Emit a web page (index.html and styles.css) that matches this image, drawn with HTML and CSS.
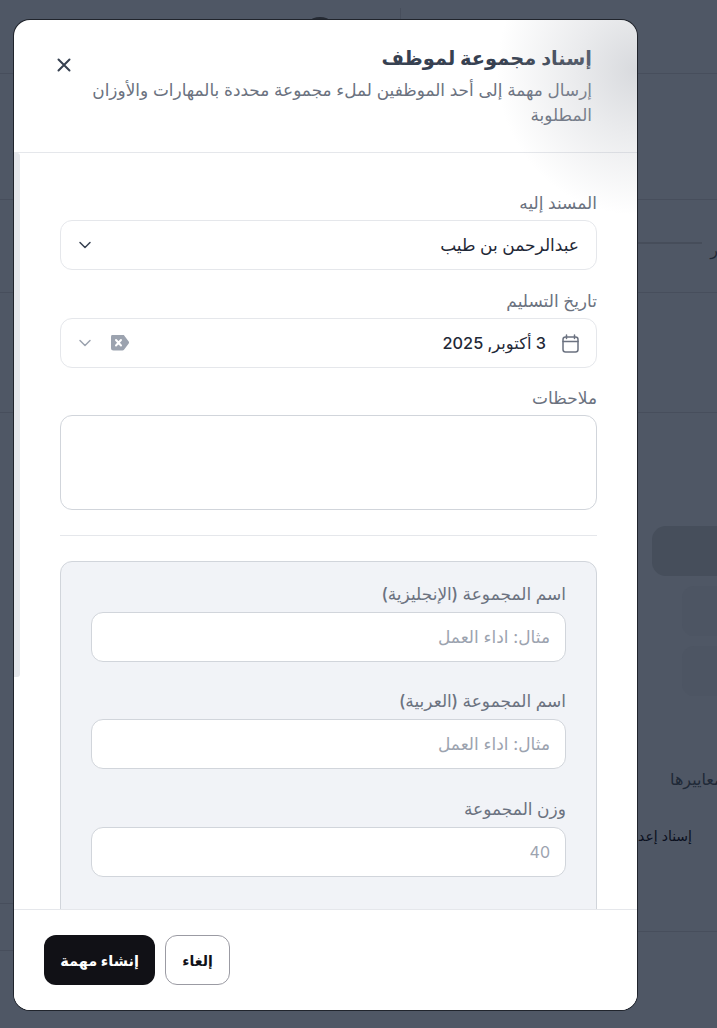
FILE: index.html
```html
<!DOCTYPE html>
<html lang="ar" dir="rtl">
<head>
  <meta charset="UTF-8" />
  <meta name="viewport" content="width=device-width, initial-scale=1.0"/>
  <title>إسناد مجموعة لموظف</title>
  <link rel="stylesheet" href="styles.css">
</head>
<body>

  <!-- page behind the dialog -->
  <div class="page">
    <div class="page-top">
      <span class="page-divider"></span>
      <span class="page-avatar"></span>
      <span class="page-name">عبدالرحمن</span>
    </div>
    <div class="page-row page-row-title"></div>
    <div class="page-row page-row-field"><span class="page-letter">ر</span><span class="page-rule"></span></div>
    <div class="page-row page-row-empty"></div>
    <div class="page-blocks">
      <div class="page-block-dark"></div>
      <div class="page-block-light"></div>
      <div class="page-block-light"></div>
    </div>
    <p class="page-note">معاييرها</p>
    <p class="page-assign">إسناد إعداد المجموعة</p>
    <div class="page-side-line page-side-first"></div>
    <div class="page-bottom-line"></div>
    <div class="page-side-line page-side-last"></div>
  </div>

  <div class="modal">
    <div class="modal-glow"></div>

    <header class="modal-head">
      <div class="modal-titles">
        <h1>إسناد مجموعة لموظف</h1>
        <p>إرسال مهمة إلى أحد الموظفين لملء مجموعة محددة بالمهارات والأوزان المطلوبة</p>
      </div>
      <button type="button" class="close-btn" aria-label="إغلاق">
        <svg width="16" height="16" viewBox="0 0 16 16" fill="none" stroke="#374151" stroke-width="2" stroke-linecap="round"><path d="M2.500 2.500l11 11M13.500 2.500l-11 11"/></svg>
      </button>
    </header>

    <div class="modal-body">
      <span class="scroll-thumb"></span>

      <form class="form">
        <div class="field">
          <label>المسند إليه</label>
          <div class="control">
            <span class="control-value">عبدالرحمن بن طيب</span>
            <svg class="chevron" width="14" height="14" viewBox="0 0 14 14" fill="none" stroke="#374151" stroke-width="1.500" stroke-linecap="round" stroke-linejoin="round"><path d="M2 4.500l5 5 5-5"/></svg>
          </div>
        </div>

        <div class="field">
          <label>تاريخ التسليم</label>
          <div class="control">
            <svg class="calendar" width="17" height="19" viewBox="0 0 17 19" fill="none" stroke="#6b7280" stroke-width="1.500" stroke-linecap="round" stroke-linejoin="round"><rect x="1" y="3" width="15" height="15" rx="2.500"/><path d="M1 7.500h15M4.500 1v3.500M12.500 1v3.500"/></svg>
            <span class="control-value date-value">3 أكتوبر, 2025</span>
            <svg class="clear-icon" width="18" height="16" viewBox="0 0 18 16"><path d="M2.500 0h9a2 2 0 0 1 1.500.700l4.700 6.300a1.700 1.700 0 0 1 0 2l-4.700 6.300a2 2 0 0 1-1.500.700h-9A2.500 2.500 0 0 1 0 13.500v-11A2.500 2.500 0 0 1 2.500 0z" fill="#9ca3af" transform="translate(0 -.5)"/><path d="M5 5l5 5.500M10 5l-5 5.500" stroke="#fff" stroke-width="2" stroke-linecap="round"/></svg>
            <svg class="chevron" width="14" height="14" viewBox="0 0 14 14" fill="none" stroke="#9ca3af" stroke-width="1.500" stroke-linecap="round" stroke-linejoin="round"><path d="M2 4.500l5 5 5-5"/></svg>
          </div>
        </div>

        <div class="field">
          <label>ملاحظات</label>
          <textarea class="notes"></textarea>
        </div>

        <hr class="separator" />

        <section class="panel">
          <div class="panel-field">
            <label>اسم المجموعة (الإنجليزية)</label>
            <input type="text" placeholder="مثال: اداء العمل" />
          </div>
          <div class="panel-field">
            <label>اسم المجموعة (العربية)</label>
            <input type="text" placeholder="مثال: اداء العمل" />
          </div>
          <div class="panel-field">
            <label>وزن المجموعة</label>
            <input type="text" class="input-number" placeholder="40" />
          </div>
        </section>
      </form>
    </div>

    <footer class="modal-foot">
      <button type="button" class="btn btn-cancel">إلغاء</button>
      <button type="button" class="btn btn-primary">إنشاء مهمة</button>
    </footer>
  </div>

</body>
</html>
```

FILE: styles.css
```css
* {
  box-sizing: border-box;
}

html, body {
  height: 100%;
}

body {
  margin: 0;
  position: relative;
  overflow: hidden;
  background-color: #4f5765;
  font-family: Inter, "DejaVu Sans", sans-serif;
  color: #1f2937;
}

/* page behind the dialog */
.page {
  height: 100%;
  color: #111827;
}

.page-top {
  height: 74px;
  border-bottom: 1px solid #474e5c;
  display: flex;
  align-items: flex-start;
  padding-right: 316px;
  padding-top: 8px;
}

.page-divider {
  width: 1px;
  height: 12px;
  background-color: #474e5c;
  margin-left: 62px;
}

.page-avatar {
  width: 36px;
  height: 36px;
  margin-top: 9px;
  border-radius: 50%;
  background-color: #252a33;
  margin-left: 18px;
}

.page-name {
  font-size: 14px;
  margin-top: 8px;
}

.page-row {
  border-bottom: 1px solid #474e5c;
}

.page-row-title {
  height: 126px;
}

.page-row-field {
  height: 93px;
  display: flex;
  align-items: flex-start;
}

.page-letter {
  font-size: 16px;
  line-height: 24px;
  margin-top: 37px;
  margin-right: -1px;
  color: #1f2937;
}

.page-rule {
  width: 70px;
  height: 2px;
  background-color: #464d5a;
  margin-right: 8px;
  margin-top: 42px;
}

.page-row-empty {
  height: 120px;
}

.page-blocks {
  padding-top: 113px;
}

.page-block-dark {
  width: 65px;
  height: 50px;
  background-color: #464e5b;
  border-radius: 14px 0 0 14px;
}

.page-block-light {
  width: 35px;
  height: 50px;
  margin-top: 10px;
  background-color: #4d5563;
  border-radius: 12px 0 0 12px;
}

.page-note {
  margin: 71px -33px 0 670px;
  font-size: 16px;
  line-height: 24px;
  color: #1f2937;
  text-align: left;
  white-space: nowrap;
}

.page-assign {
  margin: 35px 25px 0 0;
  font-size: 14px;
  line-height: 20px;
  color: #0b1020;
}

.page-side-line {
  width: 14px;
  height: 1px;
  margin-right: auto;
  background-color: #474e5c;
}

.page-side-first {
  margin-top: 57px;
}

.page-side-last {
  margin-top: 18px;
}

.page-bottom-line {
  width: 80px;
  height: 1px;
  margin-top: 27px;
  background-color: #474e5c;
}

/* dialog */
.modal {
  position: absolute;
  left: 14px;
  top: 20px;
  width: 623px;
  height: 990px;
  background-color: #fff;
  border-radius: 16px;
  box-shadow: 0 0 0 1px #20242c;
  display: flex;
  flex-direction: column;
  overflow: hidden;
}

.modal-glow {
  position: absolute;
  top: -95px;
  right: -140px;
  width: 280px;
  height: 290px;
  background: radial-gradient(closest-side, rgba(170, 174, 182, 0.46), rgba(170, 174, 182, 0.24) 45%, rgba(170, 174, 182, 0));
  pointer-events: none;
}

.modal-head {
  height: 133px;
  flex-shrink: 0;
  border-bottom: 1px solid #e5e7eb;
  padding: 24px 45px 0 40px;
  display: flex;
  justify-content: space-between;
  align-items: flex-start;
}

.modal-titles {
  width: 510px;
}

.modal-titles h1 {
  margin: 0;
  font-size: 19.4px;
  line-height: 28px;
  font-weight: 600;
  color: #374151;
}

.modal-titles p {
  margin: 6px 0 0;
  font-size: 16.9px;
  line-height: 25px;
  color: #6b7280;
}

.close-btn {
  border: none;
  background: none;
  padding: 0;
  margin-top: 11px;
  width: 20px;
  height: 20px;
  display: flex;
  align-items: center;
  justify-content: center;
}

.modal-body {
  flex: 1;
  min-height: 0;
  overflow: hidden;
  position: relative;
  padding: 38px 40px 0 46px;
}

.scroll-thumb {
  position: absolute;
  left: 0;
  top: 0;
  width: 6px;
  height: 524px;
  background-color: #e5e7eb;
  border-radius: 0 3px 3px 0;
}

.form {
  display: flex;
  flex-direction: column;
}

.field {
  margin-bottom: 18px;
}

.field:first-child {
  margin-bottom: 19px;
}

label {
  display: block;
  font-size: 17px;
  line-height: 24px;
  font-weight: 500;
  color: #6b7280;
  margin-bottom: 5px;
}

.control {
  height: 50px;
  border: 1px solid #e5e7eb;
  border-radius: 12px;
  display: flex;
  align-items: center;
  padding: 0 17px;
  font-size: 17px;
  color: #1f2937;
}

.control-value {
  flex: 1;
  font-weight: 500;
}

.date-value {
  font-size: 16.3px;
}

.calendar {
  margin-left: 16px;
}

.clear-icon {
  margin-left: 19px;
}

.notes {
  display: block;
  width: 100%;
  height: 95px;
  border: 1px solid #d1d5db;
  border-radius: 12px;
  resize: none;
}

.separator {
  border: none;
  border-top: 1px solid #e5e7eb;
  margin: 7px 0 25px;
  width: 100%;
}

.panel {
  background-color: #f1f3f7;
  border: 1px solid #d1d5db;
  border-radius: 12px;
  padding: 20px 30px 30px;
}

.panel-field {
  margin-bottom: 27px;
}

.panel-field:nth-child(2) {
  margin-bottom: 28px;
}

.panel-field label {
  margin-bottom: 6px;
}

.panel-field input {
  display: block;
  width: 100%;
  height: 50px;
  border: 1px solid #d1d5db;
  border-radius: 12px;
  background-color: #fff;
  padding: 0 15px;
  font-family: inherit;
  font-size: 17px;
  outline: none;
}

.panel-field .input-number {
  font-size: 16px;
}

.panel-field input::placeholder {
  color: #9ca3af;
}

.modal-foot {
  height: 101px;
  flex-shrink: 0;
  border-top: 1px solid #e5e7eb;
  background-color: #fff;
  padding: 25px 30px 0;
  display: flex;
  justify-content: flex-end;
  gap: 10px;
  position: relative;
}

.btn {
  height: 50px;
  border-radius: 12px;
  font-family: inherit;
  font-size: 14.5px;
  font-weight: 600;
}

.btn-cancel {
  width: 65px;
  background-color: #fff;
  border: 1px solid #9b9ba3;
  color: #111118;
  font-size: 14px;
}

.btn-primary {
  width: 111px;
  background-color: #111116;
  border: none;
  color: #fff;
}
```
